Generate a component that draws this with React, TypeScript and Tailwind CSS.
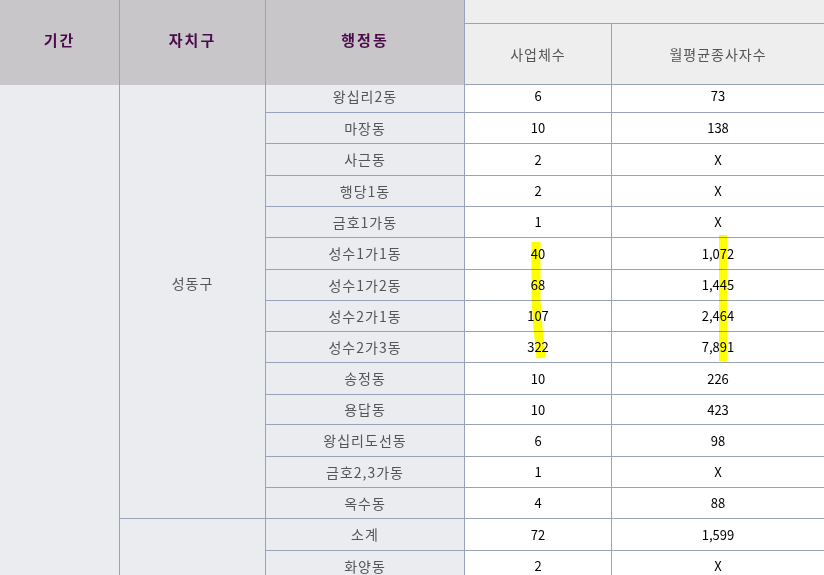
const rows: Array<{ dong: string; biz: string; emp: string; first?: boolean }> = [
  { dong: '왕십리2동', biz: '6', emp: '73', first: true },
  { dong: '마장동', biz: '10', emp: '138' },
  { dong: '사근동', biz: '2', emp: 'X' },
  { dong: '행당1동', biz: '2', emp: 'X' },
  { dong: '금호1가동', biz: '1', emp: 'X' },
  { dong: '성수1가1동', biz: '40', emp: '1,072' },
  { dong: '성수1가2동', biz: '68', emp: '1,445' },
  { dong: '성수2가1동', biz: '107', emp: '2,464' },
  { dong: '성수2가3동', biz: '322', emp: '7,891' },
  { dong: '송정동', biz: '10', emp: '226' },
  { dong: '용답동', biz: '10', emp: '423' },
  { dong: '왕십리도선동', biz: '6', emp: '98' },
  { dong: '금호2,3가동', biz: '1', emp: 'X' },
  { dong: '옥수동', biz: '4', emp: '88' },
  { dong: '소계', biz: '72', emp: '1,599' },
  { dong: '화양동', biz: '2', emp: 'X' },
];

const font = "font-['Noto_Sans_CJK_KR',_'Noto_Sans',_sans-serif]";

export default function App() {
  return (
    <div className={`relative w-[824px] h-[575px] overflow-hidden bg-white ${font}`}>
      <div className="grid grid-cols-[120px_146px_199px_147px_212px] grid-rows-[24px_61px_28px_31px_32px_31px_31px_32px_31px_31px_31px_32px_30px_32px_31px_31px_32px_31px]">
        {/* header */}
        <div className="row-span-2 col-start-1 row-start-1 bg-[#c8c6c8] border-r border-[#96a3b9] flex items-center justify-center pb-[4px] text-[15px] font-bold tracking-[2px] text-[#4b0b4b]">
          기간
        </div>
        <div className="row-span-2 col-start-2 row-start-1 bg-[#c8c6c8] border-r border-[#96a3b9] flex items-center justify-center pb-[4px] text-[15px] font-bold tracking-[2px] text-[#4b0b4b]">
          자치구
        </div>
        <div className="row-span-2 col-start-3 row-start-1 bg-[#c8c6c8] border-r border-[#96a3b9] flex items-center justify-center pb-[4px] text-[15px] font-bold tracking-[2px] text-[#4b0b4b]">
          행정동
        </div>
        <div className="col-span-2 col-start-4 row-start-1 bg-[#eeeeee] border-b border-[#96a3b9]" />
        <div className="col-start-4 row-start-2 bg-[#eeeeee] border-r border-b border-[#96a3b9] flex items-center justify-center text-[14px] tracking-[1px] text-[#555555]">
          사업체수
        </div>
        <div className="col-start-5 row-start-2 bg-[#eeeeee] border-b border-[#96a3b9] flex items-center justify-center text-[14px] tracking-[1px] text-[#555555]">
          월평균종사자수
        </div>

        {/* body */}
        <div className="col-start-1 row-start-3 row-span-16 bg-[#ebecef] border-r border-[#96a3b9]" />
        <div className="col-start-2 row-start-3 row-span-14 bg-[#ebecef] border-r border-b border-[#96a3b9] flex items-center justify-center pb-[36px] text-[14px] tracking-[1px] text-[#555555]">
          성동구
        </div>
        <div className="col-start-2 row-start-17 row-span-2 bg-[#ebecef] border-r border-[#96a3b9]" />

        {rows.map((r) => (
          <div key={r.dong} className="contents">
            <div className={`col-start-3 bg-[#ebecef] border-r border-b border-[#96a3b9] flex items-center justify-center text-[14px] tracking-[1px] text-[#555555] ${r.first ? 'pb-[5px]' : ''}`}>
              {r.dong}
            </div>
            <div className={`col-start-4 bg-white border-r border-b border-[#96a3b9] flex items-center justify-center text-[13px] text-black ${r.first ? 'pb-[5px]' : ''}`}>
              {r.biz}
            </div>
            <div className={`col-start-5 bg-white border-b border-[#96a3b9] flex items-center justify-center text-[13px] text-black ${r.first ? 'pb-[5px]' : ''}`}>
              {r.emp}
            </div>
          </div>
        ))}
      </div>

      {/* highlighter marks drawn over the numbers */}
      <svg className="absolute left-0 top-0 pointer-events-none mix-blend-multiply" width="824" height="575">
        <path d="M536 242 L536 300 L538 328 L541 358" stroke="#ffff00" strokeWidth="9" fill="none" />
        <path d="M723 235 L723 361" stroke="#ffff00" strokeWidth="8" fill="none" />
      </svg>
    </div>
  );
}
